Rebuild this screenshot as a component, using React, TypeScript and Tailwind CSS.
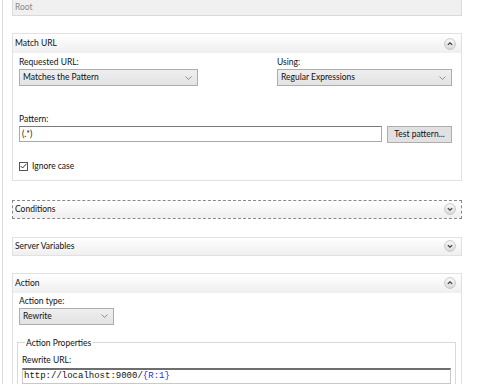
const ui = { fontFamily: "Lato, 'Noto Sans', sans-serif" };

const Chevron = () => (
  <svg width="7" height="4" viewBox="0 0 7 4" className="shrink-0">
    <path d="M0.5 0.6 L3.5 3.4 L6.5 0.6" fill="none" stroke="#7a7a7a" strokeWidth="0.8" />
  </svg>
);

const Toggle = ({ open }: { open: boolean }) => (
  <svg width="12" height="12" viewBox="0 0 12 12" className="shrink-0">
    <defs>
      <linearGradient id={open ? "tgu" : "tgd"} x1="0" y1="0" x2="0" y2="1">
        <stop offset="0" stopColor="#fbfbfb" />
        <stop offset="1" stopColor="#d9d9d9" />
      </linearGradient>
    </defs>
    <circle cx="6" cy="6" r="5.4" fill={`url(#${open ? "tgu" : "tgd"})`} stroke="#bcbcbc" strokeWidth="0.8" />
    <path
      d={open ? "M3.8 6.9 L6 4.8 L8.2 6.9" : "M3.8 5.1 L6 7.2 L8.2 5.1"}
      fill="none"
      stroke="#3a3a3a"
      strokeWidth="1.2"
    />
  </svg>
);

const Select = ({ value, width }: { value: string; width: string }) => (
  <div
    className={`${width} h-[17px] flex items-center justify-between pl-[3px] pr-[5px] border border-[#adadad] bg-gradient-to-b from-[#efefef] to-[#e3e3e3] text-[8.5px] text-[#111]`}
  >
    <span>{value}</span>
    <Chevron />
  </div>
);

const Label = ({ children }: { children: React.ReactNode }) => (
  <div className="h-[12px] leading-[12px] text-[8.5px] text-[#111]">{children}</div>
);

const Panel = ({
  title,
  open,
  focused,
  children,
}: {
  title: string;
  open: boolean;
  focused?: boolean;
  children?: React.ReactNode;
}) => (
  <div
    className={
      focused
        ? "border border-dashed border-[#8a8a8a] bg-white"
        : "border border-[#e1e1e1] bg-white"
    }
  >
    <div
      className={`${open ? "h-[19px]" : "h-[17px]"} flex items-center justify-between pl-[2px] pr-[5px] bg-gradient-to-b from-white to-[#efefef] text-[8.5px] text-[#111]`}
    >
      <span>{title}</span>
      <Toggle open={open} />
    </div>
    {children}
  </div>
);

export default function App() {
  return (
    <div className="w-[480px] h-[384px] overflow-hidden bg-white flex" style={ui}>
      <div className="w-[2px] shrink-0" />
      <div className="w-[1px] shrink-0 bg-[#dcdcdc]" />
      <div className="w-[450px] ml-[9px] shrink-0">
        <div className="h-[16px] flex items-center pl-[2px] border border-t-0 border-[#dadada] bg-[#f0f0f0] text-[8.5px] text-[#8a8a8a]">
          Root
        </div>

        <div className="mt-[17px]">
          <Panel title="Match URL" open>
            <div className="pl-[6px] pr-[9px] pt-[3px] pb-[7px]">
              <div className="flex justify-between">
                <div>
                  <Label>Requested URL:</Label>
                  <div className="mt-[1px]">
                    <Select value="Matches the Pattern" width="w-[179px]" />
                  </div>
                </div>
                <div>
                  <Label>Using:</Label>
                  <div className="mt-[1px]">
                    <Select value="Regular Expressions" width="w-[175px]" />
                  </div>
                </div>
              </div>
              <div className="mt-[27px]">
                <Label>Pattern:</Label>
                <div className="mt-[1px] flex items-start gap-[5px]">
                  <div className="flex-1 h-[16px] flex items-center pl-[2px] border border-[#a9a9a9] border-t-[#7a7a7a] text-[8.5px] text-[#111]">
                    (.*)
                  </div>
                  <div className="w-[65px] h-[17px] flex items-center justify-center border border-[#adadad] bg-[#e1e1e1] text-[8.5px] text-[#111]">
                    Test pattern...
                  </div>
                </div>
              </div>
              <div className="mt-[17px] flex items-center gap-[4px]">
                <div className="w-[9px] h-[9px] border border-[#555] flex items-center justify-center bg-white">
                  <svg width="7" height="6" viewBox="0 0 7 6">
                    <path d="M0.6 3 L2.6 5 L6.4 0.8" fill="none" stroke="#222" strokeWidth="0.9" />
                  </svg>
                </div>
                <span className="text-[8.5px] text-[#111]">Ignore case</span>
              </div>
            </div>
          </Panel>
        </div>

        <div className="mt-[19px]">
          <Panel title="Conditions" open={false} focused />
        </div>

        <div className="mt-[18px]">
          <Panel title="Server Variables" open={false} />
        </div>

        <div className="mt-[17px]">
          <Panel title="Action" open>
            <div className="pl-[6px] pr-[5px] pt-[2px] pb-[10px]">
              <Label>Action type:</Label>
              <div className="mt-[1px]">
                <Select value="Rewrite" width="w-[95px]" />
              </div>
              <fieldset className="mt-[12px] ml-[-2px] border border-[#d9d9d9] pl-[4px] pr-[4px] pb-[8px]">
                <legend className="ml-[3px] px-[1px] text-[8.5px] leading-[12px] text-[#111]">
                  Action Properties
                </legend>
                <div className="mt-[5px]">
                  <Label>Rewrite URL:</Label>
                </div>
                <div className="mt-[2px] h-[16px] flex items-center pl-[1px] border border-[#c9c9c9] border-t-[#6e6e6e] border-t-2 text-[9px] text-[#111]" style={{ fontFamily: "'Liberation Mono', monospace" }}>
                  http://localhost:9000/<span className="text-[#2a2ad8]">{"{R:1}"}</span>
                </div>
              </fieldset>
            </div>
          </Panel>
        </div>
      </div>
    </div>
  );
}
